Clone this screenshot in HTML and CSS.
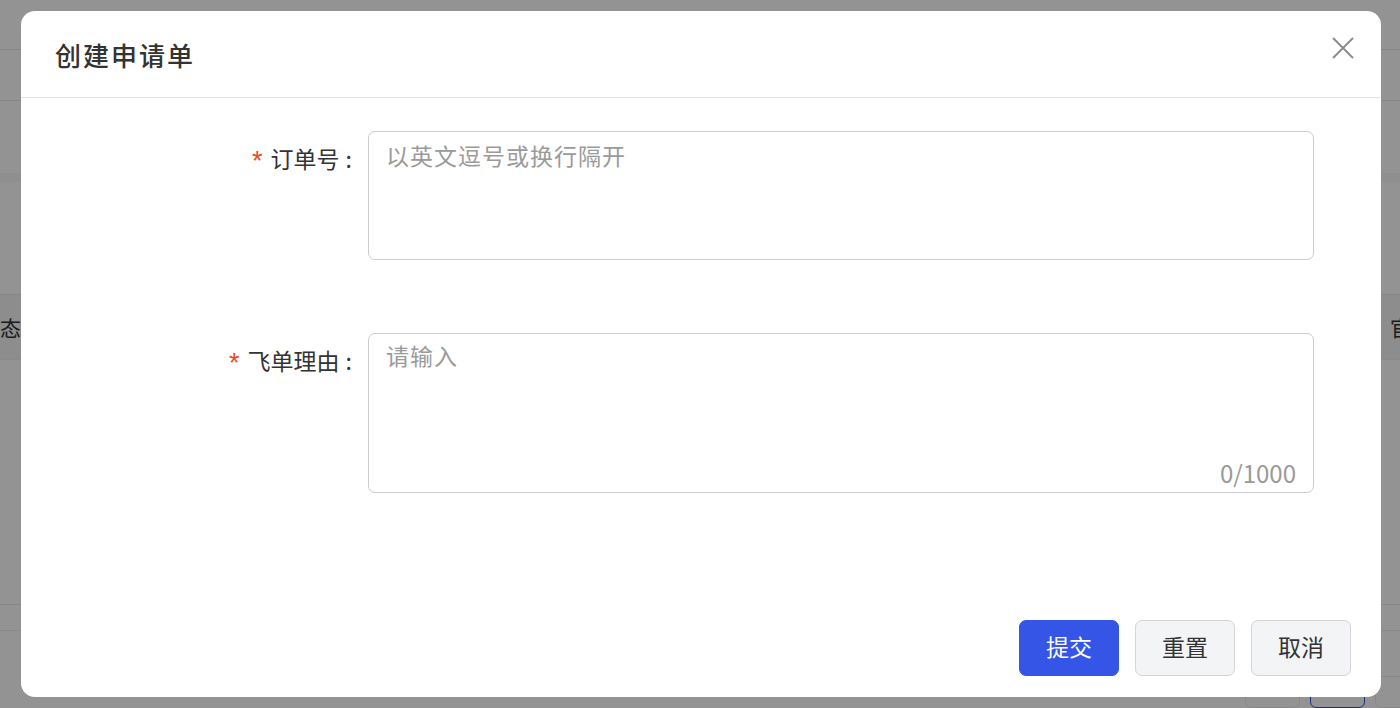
FILE: index.html
```html
<!DOCTYPE html>
<html lang="zh-CN">

<head>
    <meta charset="UTF-8">
    <meta name="viewport" content="width=device-width, initial-scale=1.0">
    <title>创建申请单</title>
    <link rel="stylesheet" href="styles.css">
</head>

<body>
    <!-- page behind the mask -->
    <div class="page">
        <div class="page-top"></div>
        <div class="page-filter"></div>
        <div class="page-strip"></div>
        <div class="table-head">
            <span class="col-first">态</span>
            <span class="col-last">官</span>
        </div>
        <div class="table-body"></div>
        <div class="table-row"></div>
        <div class="pager">
            <span class="pager-btn"></span>
            <span class="pager-btn active"></span>
            <span class="pager-btn"></span>
        </div>
    </div>

    <div class="modal">
        <header class="modal-header">
            <h1 class="modal-title">创建申请单</h1>
            <button class="modal-close" type="button" aria-label="关闭">
                <svg width="22" height="22" viewBox="0 0 22 22">
                    <path d="M1 1 L21 21 M21 1 L1 21" stroke="#8c8c8c" stroke-width="2" fill="none" />
                </svg>
            </button>
        </header>

        <form class="modal-body" onsubmit="event.preventDefault();">
            <div class="form-row">
                <label class="form-label" for="orderNo"><span class="req">*</span>订单号<span class="colon">:</span></label>
                <div class="field">
                    <textarea id="orderNo" class="input input-order" placeholder="以英文逗号或换行隔开"></textarea>
                </div>
            </div>

            <div class="form-row">
                <label class="form-label" for="reason"><span class="req">*</span>飞单理由<span class="colon">:</span></label>
                <div class="field">
                    <textarea id="reason" class="input input-reason" placeholder="请输入" maxlength="1000"></textarea>
                    <span class="counter">0/1000</span>
                </div>
            </div>
        </form>

        <footer class="modal-footer">
            <button class="btn btn-primary" type="submit">提交</button>
            <button class="btn" type="reset">重置</button>
            <button class="btn" type="button">取消</button>
        </footer>
    </div>
</body>

</html>
```

FILE: styles.css
```css
body {
    margin: 0;
    padding: 0;
    width: 1400px;
    height: 708px;
    overflow: hidden;
    background-color: #939393;
    font-family: "Noto Sans CJK SC", "Noto Sans", sans-serif;
    color: #333;
}

/* page under the mask */
.page {
    display: flex;
    flex-direction: column;
    height: 708px;
}

.page-top {
    height: 51px;
    border-bottom: 1px solid #858585;
}

.page-filter {
    height: 52px;
    border-bottom: 1px solid #868686;
}

.page-strip {
    height: 10px;
    margin-top: 72px;
    background-color: #8f8f8f;
}

.table-head {
    display: flex;
    justify-content: space-between;
    align-items: center;
    height: 66px;
    margin-top: 112px;
    background-color: #8d8d8d;
    border-top: 1px solid #858585;
    border-bottom: 1px solid #8a8a8a;
    font-size: 21px;
    color: #1c1c1c;
}

.col-last {
    margin-right: -11px;
}

.table-body {
    height: 255px;
    border-bottom: 1px solid #868686;
}

.table-row {
    height: 26px;
    border-bottom: 1px solid #8a8a8a;
}

.pager {
    display: flex;
    justify-content: flex-end;
    gap: 10px;
    margin-top: 45px;
    margin-right: -30px;
}

.pager-btn {
    width: 53px;
    height: 30px;
    border: 1px solid #878787;
    border-radius: 6px;
}

.pager-btn.active {
    border-color: #1f2f7a;
}

/* modal */
.modal {
    position: absolute;
    left: 21px;
    top: 11px;
    width: 1360px;
    height: 686px;
    display: flex;
    flex-direction: column;
    background-color: #fff;
    border-radius: 14px;
}

.modal-header {
    display: flex;
    justify-content: space-between;
    align-items: center;
    height: 86px;
    padding: 0 27px 0 34px;
    border-bottom: 1px solid #e2e2e8;
}

.modal-title {
    margin: 0;
    font-size: 26px;
    font-weight: 500;
    letter-spacing: 2px;
    color: #333;
}

.modal-close {
    padding: 0;
    border: none;
    background: none;
    cursor: pointer;
    display: flex;
    margin-top: -12px;
}

.modal-body {
    display: flex;
    flex-direction: column;
    gap: 73px;
    padding-top: 33px;
}

.form-row {
    display: grid;
    grid-template-columns: 347px 946px;
}

.form-label {
    padding: 11px 16px 0 0;
    text-align: right;
    font-size: 23px;
    line-height: 32px;
    color: #333;
}

.req {
    color: #f04a23;
    margin-right: 8px;
    font-family: "Liberation Sans", sans-serif;
    font-size: 27px;
    vertical-align: -2px;
}

.colon {
    margin-left: 6px;
}

.field {
    position: relative;
    display: flex;
}

.input {
    width: 100%;
    box-sizing: border-box;
    margin: 0;
    padding: 9px 17px;
    border: 1.5px solid #cbcbd0;
    border-radius: 7px;
    font-family: "Noto Sans CJK SC", "Noto Sans", sans-serif;
    font-size: 23px;
    line-height: 28px;
    letter-spacing: 1px;
    color: #333;
    resize: none;
    outline: none;
    background: transparent;
}

.input::placeholder {
    color: #9a9a9a;
}

.input-order {
    height: 129px;
}

.input-reason {
    height: 160px;
    padding-top: 7px;
}

.counter {
    position: absolute;
    right: 18px;
    bottom: 3px;
    font-size: 24px;
    color: #999;
}

.modal-footer {
    display: flex;
    justify-content: flex-end;
    gap: 16px;
    margin-top: auto;
    padding: 0 30px 21px 0;
}

.btn {
    width: 100px;
    height: 56px;
    padding: 0 0 4px;
    border: 1.5px solid #d4d4d9;
    border-radius: 7px;
    background-color: #f3f4f6;
    font-family: "Noto Sans CJK SC", "Noto Sans", sans-serif;
    font-size: 23px;
    color: #333;
    cursor: pointer;
}

.btn-primary {
    border-color: #3455e6;
    background-color: #3455e6;
    color: #fff;
}
```
